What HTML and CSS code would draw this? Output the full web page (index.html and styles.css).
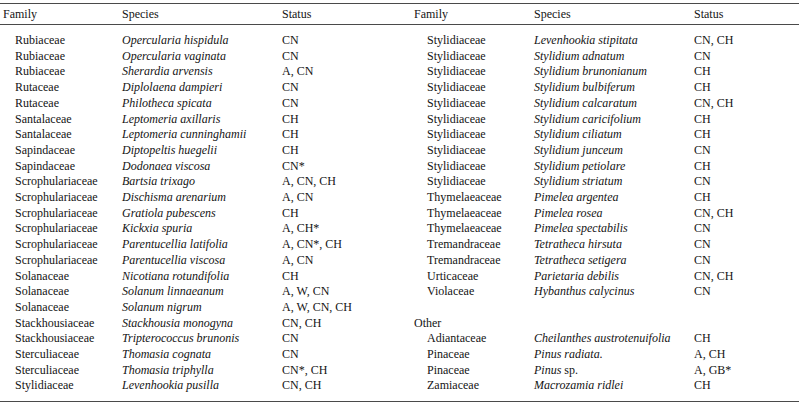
FILE: index.html
```html
<!DOCTYPE html>
<html>
<head>
<meta charset="utf-8">
<link rel="stylesheet" href="styles.css">
</head>
<body>
<div class="tbl">
  <div class="head">
    <div class="half left">
      <div>Family</div><div>Species</div><div>Status</div>
    </div>
    <div class="half right">
      <div>Family</div><div>Species</div><div>Status</div>
    </div>
  </div>
  <div class="body">
    <div class="half left">
      <div class="fam">Rubiaceae</div><div class="sp">Opercularia hispidula</div><div>CN</div>
      <div class="fam">Rubiaceae</div><div class="sp">Opercularia vaginata</div><div>CN</div>
      <div class="fam">Rubiaceae</div><div class="sp">Sherardia arvensis</div><div>A, CN</div>
      <div class="fam">Rutaceae</div><div class="sp">Diplolaena dampieri</div><div>CN</div>
      <div class="fam">Rutaceae</div><div class="sp">Philotheca spicata</div><div>CN</div>
      <div class="fam">Santalaceae</div><div class="sp">Leptomeria axillaris</div><div>CH</div>
      <div class="fam">Santalaceae</div><div class="sp">Leptomeria cunninghamii</div><div>CH</div>
      <div class="fam">Sapindaceae</div><div class="sp">Diptopeltis huegelii</div><div>CH</div>
      <div class="fam">Sapindaceae</div><div class="sp">Dodonaea viscosa</div><div>CN*</div>
      <div class="fam">Scrophulariaceae</div><div class="sp">Bartsia trixago</div><div>A, CN, CH</div>
      <div class="fam">Scrophulariaceae</div><div class="sp">Dischisma arenarium</div><div>A, CN</div>
      <div class="fam">Scrophulariaceae</div><div class="sp">Gratiola pubescens</div><div>CH</div>
      <div class="fam">Scrophulariaceae</div><div class="sp">Kickxia spuria</div><div>A, CH*</div>
      <div class="fam">Scrophulariaceae</div><div class="sp">Parentucellia latifolia</div><div>A, CN*, CH</div>
      <div class="fam">Scrophulariaceae</div><div class="sp">Parentucellia viscosa</div><div>A, CN</div>
      <div class="fam">Solanaceae</div><div class="sp">Nicotiana rotundifolia</div><div>CH</div>
      <div class="fam">Solanaceae</div><div class="sp">Solanum linnaeanum</div><div>A, W, CN</div>
      <div class="fam">Solanaceae</div><div class="sp">Solanum nigrum</div><div>A, W, CN, CH</div>
      <div class="fam">Stackhousiaceae</div><div class="sp">Stackhousia monogyna</div><div>CN, CH</div>
      <div class="fam">Stackhousiaceae</div><div class="sp">Tripterococcus brunonis</div><div>CN</div>
      <div class="fam">Sterculiaceae</div><div class="sp">Thomasia cognata</div><div>CN</div>
      <div class="fam">Sterculiaceae</div><div class="sp">Thomasia triphylla</div><div>CN*, CH</div>
      <div class="fam">Stylidiaceae</div><div class="sp">Levenhookia pusilla</div><div>CN, CH</div>
    </div>
    <div class="half right">
      <div class="fam">Stylidiaceae</div><div class="sp">Levenhookia stipitata</div><div>CN, CH</div>
      <div class="fam">Stylidiaceae</div><div class="sp">Stylidium adnatum</div><div>CN</div>
      <div class="fam">Stylidiaceae</div><div class="sp">Stylidium brunonianum</div><div>CH</div>
      <div class="fam">Stylidiaceae</div><div class="sp">Stylidium bulbiferum</div><div>CH</div>
      <div class="fam">Stylidiaceae</div><div class="sp">Stylidium calcaratum</div><div>CN, CH</div>
      <div class="fam">Stylidiaceae</div><div class="sp">Stylidium caricifolium</div><div>CH</div>
      <div class="fam">Stylidiaceae</div><div class="sp">Stylidium ciliatum</div><div>CH</div>
      <div class="fam">Stylidiaceae</div><div class="sp">Stylidium junceum</div><div>CN</div>
      <div class="fam">Stylidiaceae</div><div class="sp">Stylidium petiolare</div><div>CH</div>
      <div class="fam">Stylidiaceae</div><div class="sp">Stylidium striatum</div><div>CN</div>
      <div class="fam">Thymelaeaceae</div><div class="sp">Pimelea argentea</div><div>CH</div>
      <div class="fam">Thymelaeaceae</div><div class="sp">Pimelea rosea</div><div>CN, CH</div>
      <div class="fam">Thymelaeaceae</div><div class="sp">Pimelea spectabilis</div><div>CN</div>
      <div class="fam">Tremandraceae</div><div class="sp">Tetratheca hirsuta</div><div>CN</div>
      <div class="fam">Tremandraceae</div><div class="sp">Tetratheca setigera</div><div>CN</div>
      <div class="fam">Urticaceae</div><div class="sp">Parietaria debilis</div><div>CN, CH</div>
      <div class="fam">Violaceae</div><div class="sp">Hybanthus calycinus</div><div>CN</div>
      <div class="blank"></div>
      <div class="group">Other</div>
      <div class="fam">Adiantaceae</div><div class="sp">Cheilanthes austrotenuifolia</div><div>CH</div>
      <div class="fam">Pinaceae</div><div class="sp">Pinus radiata.</div><div>A, CH</div>
      <div class="fam">Pinaceae</div><div><span class="sp">Pinus</span> sp.</div><div>A, GB*</div>
      <div class="fam">Zamiaceae</div><div class="sp">Macrozamia ridlei</div><div>CH</div>
    </div>
  </div>
</div>
</body>
</html>
```

FILE: styles.css
```css
html, body {
  margin: 0;
  padding: 0;
  background: #fff;
}
body {
  font-family: "Liberation Serif", "Times New Roman", serif;
  font-size: 12px;
  color: #141414;
}
.tbl {
  margin-top: 3px;
  width: 799px;
  border-top: 1px solid #4a4a4a;
  border-bottom: 1px solid #4a4a4a;
}
.head {
  display: flex;
  height: 20px;
  line-height: 20px;
  border-bottom: 1px solid #4a4a4a;
}
.body {
  display: flex;
  padding: 8px 0 7px 0;
  line-height: 15.71px;
}
.half {
  display: grid;
}
.left {
  width: 411px;
  padding-left: 3px;
  grid-template-columns: 119px 160px 1fr;
}
.right {
  flex: 1;
  grid-template-columns: 120px 160px 1fr;
}
.left .fam { padding-left: 12px; }
.right .fam { padding-left: 13px; }
.sp { font-style: italic; }
.blank, .group { grid-column: 1 / -1; }
.blank { height: 15.71px; }
```
